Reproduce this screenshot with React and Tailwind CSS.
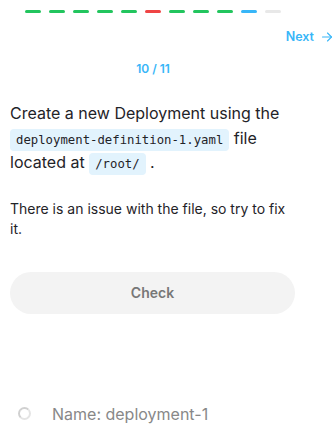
import React from "react";

const segs = ["g","g","g","g","g","r","g","g","g","b","e"];
const segClass = {
  g: "bg-[#22c55e]",
  r: "bg-[#ef4444]",
  b: "bg-[#38b6f8]",
  e: "bg-[#e8e8e8]",
};

const mono = { fontFamily: "'DejaVu Sans Mono', monospace" };

export default function App() {
  return (
    <div className="w-[336px] h-[430px] bg-white overflow-hidden text-[#1f2328]" style={{ fontFamily: "Inter, 'Noto Sans', sans-serif" }}>
      <div className="w-[306px] flex justify-center gap-2 pt-[10px]">
        {segs.map((s, i) => (
          <div key={i} className={`w-4 h-[3px] rounded-full ${segClass[s]}`} />
        ))}
      </div>
      <div className="flex justify-end pr-[3px] mt-[16px]">
        <button className="flex items-center gap-[7px] text-[12.5px] leading-[15px] font-semibold text-[#38b6f8]">
          Next
          <svg width="12" height="12" viewBox="0 0 24 24" fill="none" stroke="currentColor" strokeWidth="2.2" strokeLinecap="round" strokeLinejoin="round">
            <path d="M3 12h18" />
            <path d="M13 4l8 8-8 8" />
          </svg>
        </button>
      </div>
      <div className="w-[306px] text-center text-[12px] leading-[15px] font-semibold text-[#38b6f8] mt-[17px]">10 / 11</div>
      <div className="w-[305px] px-[10px] mt-[25px]">
        <p className="text-[16px] leading-[24.5px]">
          Create a new Deployment using the{" "}
          <code className="bg-[#e2f3fd] rounded px-[6px] py-[4px] text-[12.3px] leading-none" style={mono}>deployment-definition-1.yaml</code>{" "}
          file located at{" "}
          <code className="bg-[#e2f3fd] rounded px-[6px] py-[4px] text-[12.3px] leading-none" style={mono}>/root/</code>{" "}.
        </p>
        <p className="text-[14px] leading-[20px] mt-[24px]">There is an issue with the file, so try to fix it.</p>
        <button className="w-full h-[42px] rounded-full bg-[#f3f3f3] text-[14px] font-semibold text-[#777] mt-[33px]">Check</button>
        <div className="flex items-center mt-[88px] pl-[8px] gap-[21px]">
          <div className="w-[13px] h-[13px] rounded-full border-[2.5px] border-[#d0d0d0] border-r-[#e4e4e4] border-b-[#e4e4e4]" />
          <span className="text-[16px] leading-[24px] text-[#888]">Name: deployment-1</span>
        </div>
      </div>
    </div>
  );
}
